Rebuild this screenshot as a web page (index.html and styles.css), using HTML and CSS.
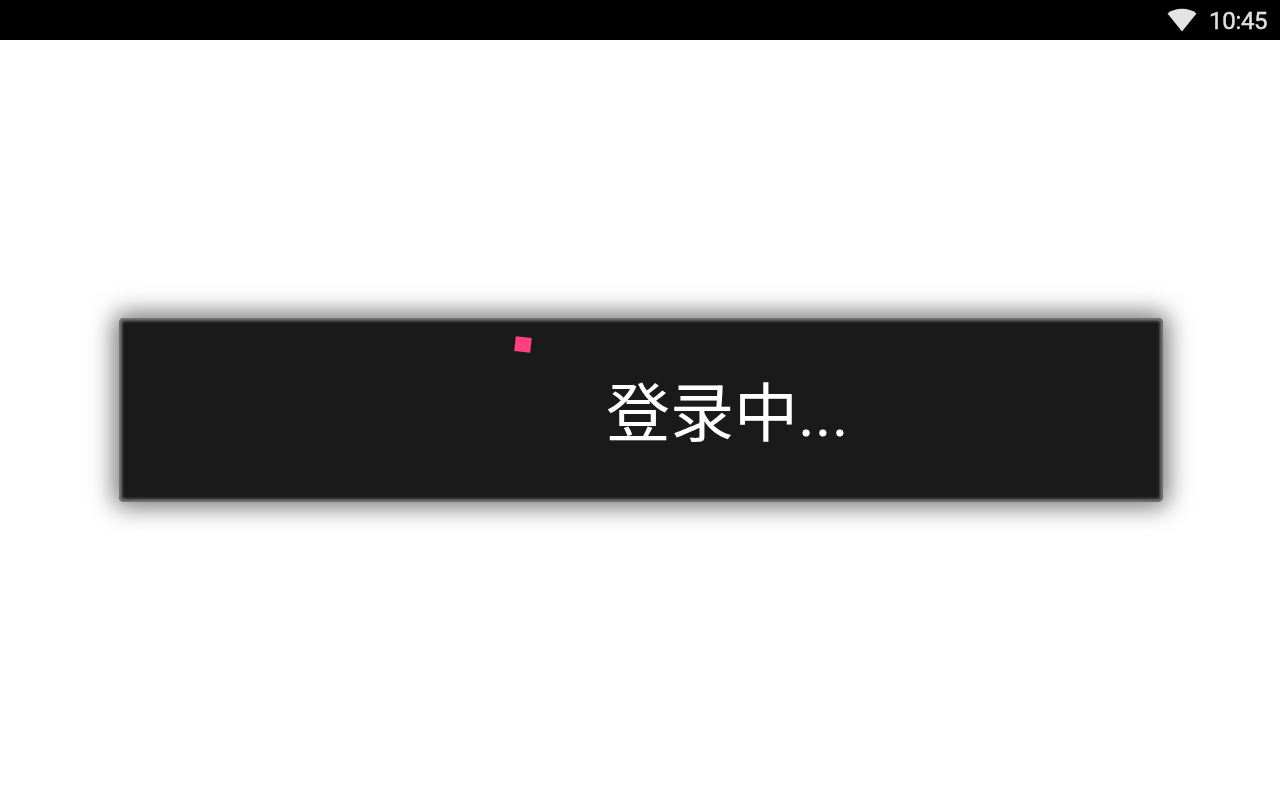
FILE: index.html
```html
<!DOCTYPE html>
<html lang="zh-CN">
<head>
<meta charset="utf-8">
<title>登录中</title>
<link rel="stylesheet" href="styles.css">
</head>
<body>
<div class="statusbar">
  <svg class="wifi" width="30" height="24" viewBox="0 0 30 24"><path d="M0.5 5.5C4.5 2.3 9.5 0.8 15 0.8S25.5 2.3 29.5 5.5L15 23.5Z"/></svg>
  <span class="clock">10:45</span>
</div>
<main class="screen">
  <div class="dialog">
    <div class="spinner"></div>
    <div class="message">登录中...</div>
  </div>
</main>
</body>
</html>
```
FILE: styles.css
```css
html, body {
  margin: 0;
  padding: 0;
  height: 100%;
  background: #fff;
  overflow: hidden;
}
body {
  display: flex;
  flex-direction: column;
}
.statusbar {
  flex: none;
  height: 40px;
  background: #000;
  display: flex;
  align-items: center;
  justify-content: flex-end;
  padding-right: 13px;
  gap: 12px;
}
.wifi {
  fill: #e4e4e4;
  margin-top: -1px;
}
.clock {
  font: 400 24px/40px Roboto, sans-serif;
  -webkit-text-stroke: 0.4px #e0e0e0;
  letter-spacing: -0.3px;
  color: #e0e0e0;
  margin-top: 2px;
  will-change: transform;
}
.screen {
  flex: 1;
  display: flex;
  justify-content: flex-start;
  align-items: flex-start;
  padding-top: 278px;
  padding-left: 119px;
}
.dialog {
  position: relative;
  box-sizing: border-box;
  width: 1044px;
  height: 184px;
  background: #1a1a1a;
  border-radius: 5px;
  box-shadow: 0 0 24px 5px rgba(0, 0, 0, 0.55), inset 0 0 3px 3px rgba(140, 140, 140, 0.8);
  display: flex;
  align-items: center;
  padding-left: 487px;
  padding-top: 10px;
}
.spinner {
  position: absolute;
  left: 396px;
  top: 19px;
  width: 16px;
  height: 15px;
  background: #ff4081;
  transform: rotate(6deg);
}
.message {
  font: 400 64px/1 Roboto, "Noto Sans CJK SC", sans-serif;
  color: #fff;
  white-space: nowrap;
}
```
